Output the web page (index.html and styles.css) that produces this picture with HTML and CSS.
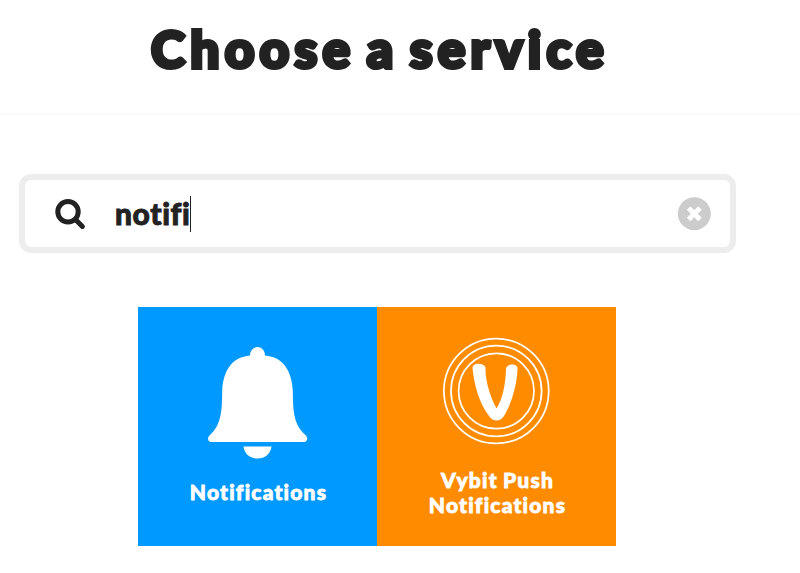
FILE: index.html
```html
<!DOCTYPE html>
<html lang="en">
<head>
<meta charset="utf-8">
<title>Choose a service</title>
<link rel="stylesheet" href="styles.css">
</head>
<body>
<header class="header"><h1 class="title">Choose a service</h1></header>
<main class="content">
  <div class="search">
    <svg class="search-icon" width="32" height="32" viewBox="0 0 32 32"><circle cx="14" cy="13.8" r="10.2"/><path d="M21.700 21.700l6.700 6.700"/></svg>
    <span class="query">notifi</span><span class="caret"></span>
    <svg class="clear" width="34" height="34" viewBox="0 0 34 34"><circle cx="17.300" cy="16.700" r="16.500"/><path d="M11.600 11l11.400 11.400M23 11L11.600 22.400"/></svg>
  </div>
  <div class="services">
    <div class="card card-blue">
      <svg class="bell" width="100" height="112" viewBox="0 0 100 112"><path d="M42 8.500C42 4 45 0 49.500 0S57 4 57 8.500C75 10 84 24 84.800 44C85 66 86 78 98 88.500C100.500 91 99 95 96 95H3C0 95 -1 91 1.500 88.500C13 78 14 66 14.200 44C15 24 24 10 42 8.500Z"/><path d="M35.500 99.500H63.500C62.500 107 57 111.500 49.500 111.500S36.500 107 35.500 99.500Z"/></svg>
      <div class="label label-single">Notifications</div>
    </div>
    <div class="card card-orange">
      <svg class="rings" width="108" height="108" viewBox="0 0 108 108"><circle cx="53.300" cy="54" r="52.400"/><circle cx="53.300" cy="54" r="45.300"/><circle cx="53.300" cy="54" r="37.700"/><path d="M29.500 31C29.500 25.500 41 25.500 42.500 30.500C42 44 48 62 53.500 71.500C59.500 62 62.500 48 63 32C64 26 75 26 74.500 32C74 48 68 68 61 79C57 85 50 85 46 79C36 66 31 47 29.500 31Z"/></svg>
      <div class="label">Vybit Push<br>Notifications</div>
    </div>
  </div>
</main>
</body>
</html>
```
FILE: styles.css
```css
* { box-sizing: border-box; }
body { margin: 0; background: #fff; font-family: Lato, sans-serif; color: #222; }
.header { height: 115px; border-bottom: 2px solid #fafafa; padding-top: 17px; }
.title { margin: 0; width: 760px; text-align: center; font-size: 51.5px; line-height: 63px; font-weight: 900; white-space: nowrap; letter-spacing: 5.2px; word-spacing: -6px; -webkit-text-stroke: 4px #222; }
.content { width: 717px; margin: 59px 0 0 19px; }
.search { height: 79px; border: 6px solid #ededed; border-radius: 12px; display: flex; align-items: center; padding: 0 19px 0 29px; }
.search-icon { fill: none; stroke: #222; stroke-width: 5; stroke-linecap: round; }
.query { margin: -2px 0 0 29px; font-size: 30px; font-weight: 900; line-height: 36px; letter-spacing: .6px; font-variant-ligatures: none; -webkit-text-stroke: .9px #222; }
.caret { width: 1px; height: 36px; background: #222; }
.clear { margin-left: auto; fill: #ccc; }
.clear path { stroke: #fff; stroke-width: 5; }
.services { display: flex; margin: 54px 0 0 119px; }
.card { width: 239px; height: 239px; display: flex; flex-direction: column; align-items: center; }
.card-blue { background: #09f; padding-top: 40px; }
.card-orange { background: #ff8c00; padding-top: 30px; }
.bell { fill: #fff; }
.rings { fill: none; stroke: #fff; stroke-width: 1.7; }
.rings path { fill: #fff; stroke: none; }
.label { margin-top: 22px; padding-left: 2px; color: #fff; text-align: center; font-size: 21px; line-height: 25px; font-weight: 900; letter-spacing: 1.2px; word-spacing: -1px; font-variant-ligatures: none; -webkit-text-stroke: .8px #fff; }
.label-single { margin-top: 20px; }
```
